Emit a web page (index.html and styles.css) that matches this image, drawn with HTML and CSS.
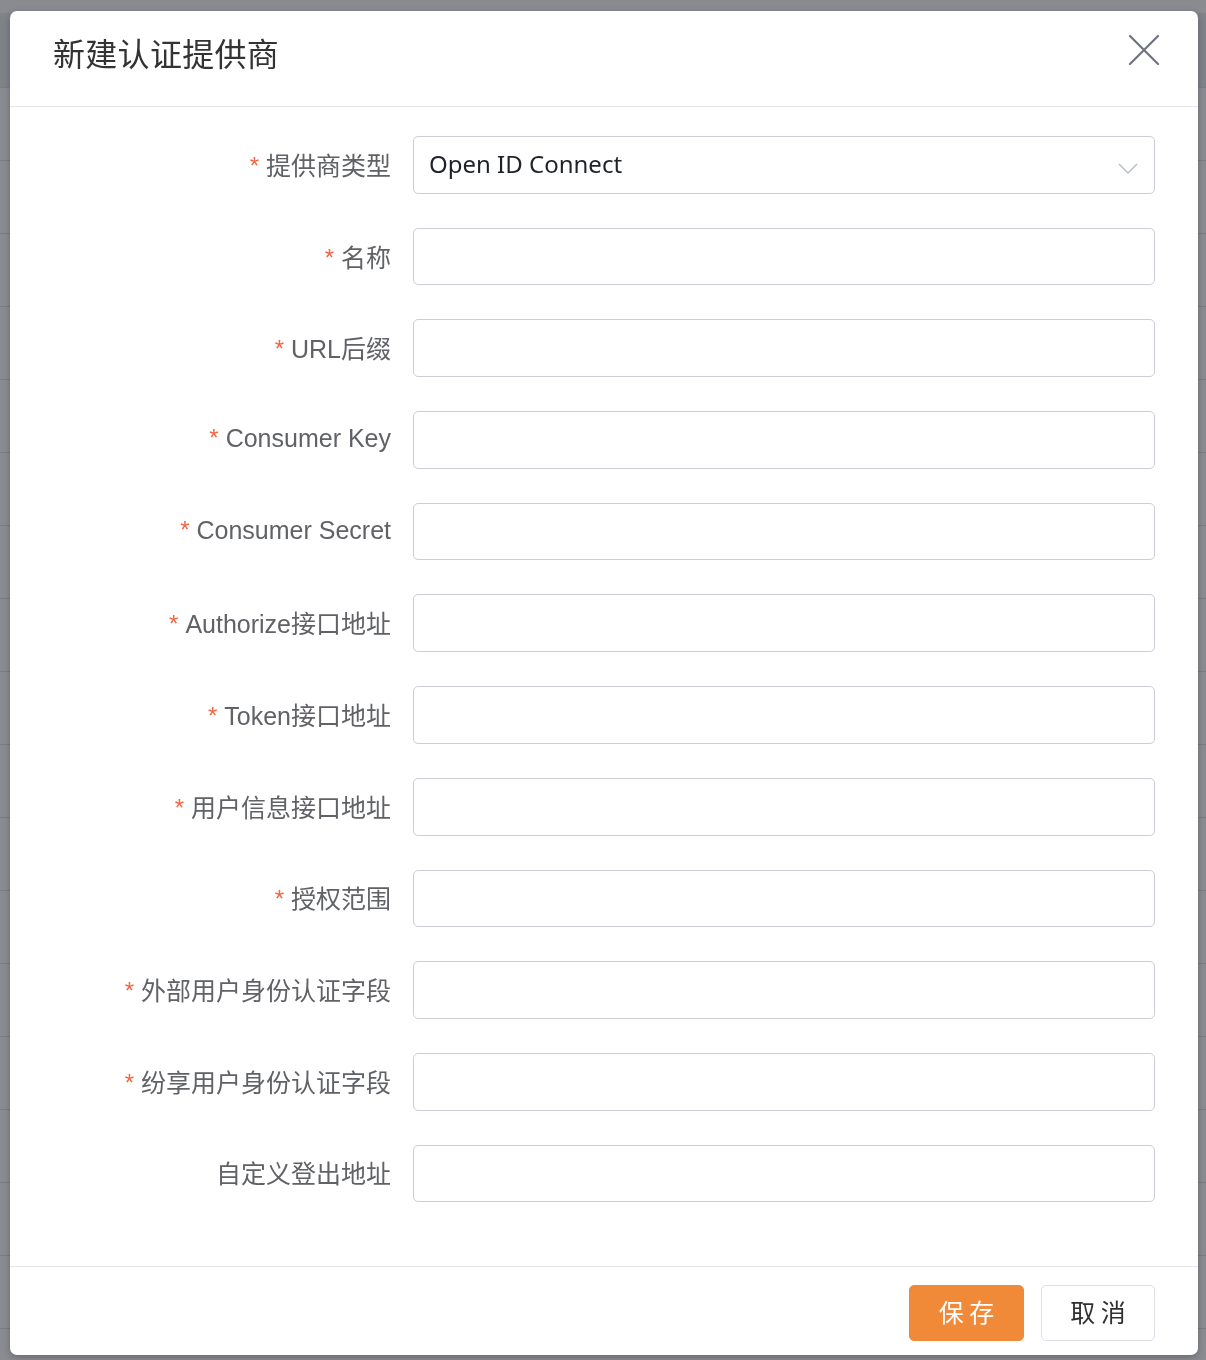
FILE: index.html
```html
<!DOCTYPE html>
<html lang="zh-CN">
<head>
<meta charset="utf-8">
<title>新建认证提供商</title>
<link rel="stylesheet" href="styles.css">
</head>
<body>
<div class="page">
  <div class="page-top"></div>
  <div class="page-head"></div>
  <div class="page-row"></div><div class="page-row"></div><div class="page-row"></div>
  <div class="page-row"></div><div class="page-row"></div><div class="page-row"></div>
  <div class="page-row"></div><div class="page-row"></div><div class="page-row"></div>
  <div class="page-row"></div><div class="page-row"></div><div class="page-row"></div>
  <div class="page-row"></div><div class="page-row"></div><div class="page-row"></div>
  <div class="page-row"></div><div class="page-row"></div><div class="page-row"></div>
</div>
<div class="mask"></div>

<div class="dialog">
  <div class="dialog-header">
    <span class="dialog-title">新建认证提供商</span>
    <button class="dialog-close" type="button" aria-label="关闭">
      <svg width="32" height="30" viewBox="0 0 32 30"><path d="M2 1 L30 29 M30 1 L2 29" stroke="#6f7380" stroke-width="2.2" stroke-linecap="round" fill="none"/></svg>
    </button>
  </div>

  <form class="dialog-body">
    <div class="form-item">
      <label class="form-label required">提供商类型</label>
      <div class="form-control select">
        <span class="select-value">Open ID Connect</span>
        <svg class="select-arrow" width="20" height="11" viewBox="0 0 20 11"><path d="M1 1 L10 10 L19 1" stroke="#bcc0c8" stroke-width="1.6" fill="none"/></svg>
      </div>
    </div>
    <div class="form-item">
      <label class="form-label required">名称</label>
      <input class="form-control" type="text">
    </div>
    <div class="form-item">
      <label class="form-label required">URL后缀</label>
      <input class="form-control" type="text">
    </div>
    <div class="form-item">
      <label class="form-label required">Consumer Key</label>
      <input class="form-control" type="text">
    </div>
    <div class="form-item">
      <label class="form-label required">Consumer Secret</label>
      <input class="form-control" type="text">
    </div>
    <div class="form-item">
      <label class="form-label required">Authorize接口地址</label>
      <input class="form-control" type="text">
    </div>
    <div class="form-item">
      <label class="form-label required">Token接口地址</label>
      <input class="form-control" type="text">
    </div>
    <div class="form-item">
      <label class="form-label required">用户信息接口地址</label>
      <input class="form-control" type="text">
    </div>
    <div class="form-item">
      <label class="form-label required">授权范围</label>
      <input class="form-control" type="text">
    </div>
    <div class="form-item">
      <label class="form-label required">外部用户身份认证字段</label>
      <input class="form-control" type="text">
    </div>
    <div class="form-item">
      <label class="form-label required">纷享用户身份认证字段</label>
      <input class="form-control" type="text">
    </div>
    <div class="form-item">
      <label class="form-label">自定义登出地址</label>
      <input class="form-control" type="text">
    </div>
  </form>

  <div class="dialog-footer">
    <button class="btn btn-primary" type="button">保 存</button>
    <button class="btn btn-default" type="button">取 消</button>
  </div>
</div>
</body>
</html>
```

FILE: styles.css
```css
* { box-sizing: border-box; }

html, body {
  margin: 0;
  padding: 0;
  width: 1206px;
  height: 1360px;
  overflow: hidden;
  font-family: "Liberation Sans", "Noto Sans CJK SC", sans-serif;
}

/* underlying list page */
.page {
  background: #ffffff;
  height: 1360px;
}
.page-top { height: 13px; background: #ffffff; }
.page-head { height: 75px; background: #ebedf0; border-bottom: 1px solid #e2e4e8; }
.page-row { height: 73px; border-bottom: 1px solid #e0e1e4; }

.mask {
  position: fixed;
  inset: 0;
  background: rgba(9, 13, 26, 0.48);
}

/* dialog */
.dialog {
  position: absolute;
  left: 10px;
  top: 11px;
  width: 1188px;
  height: 1344px;
  background: #ffffff;
  border-radius: 7px;
  box-shadow: 0 2px 6px rgba(0, 0, 0, 0.25);
  display: flex;
  flex-direction: column;
}

.dialog-header {
  height: 96px;
  padding: 0 38px 0 43px;
  border-bottom: 1px solid #e4e4e7;
  display: flex;
  align-items: center;
  justify-content: space-between;
  flex-shrink: 0;
}
.dialog-title {
  font-family: "Noto Sans CJK SC", sans-serif;
  font-size: 32px;
  color: #333333;
  margin-top: -14px;
  letter-spacing: 0.3px;
}
.dialog-close {
  border: 0;
  background: none;
  padding: 0;
  width: 32px;
  height: 30px;
  margin-top: -17px;
  cursor: pointer;
}
.dialog-close svg { display: block; }

.dialog-body {
  flex: 1;
  margin: 0;
  padding: 29px 43px 0 43px;
}

.form-item {
  display: flex;
  align-items: center;
  height: 57.7px;
  margin-bottom: 34px;
}
.form-label {
  width: 360px;
  padding-right: 22px;
  text-align: right;
  font-size: 25px;
  color: #606266;
  white-space: nowrap;
  flex-shrink: 0;
  margin-top: -2px;
}
.form-label.required::before {
  content: "*";
  color: #f3653f;
  margin-right: 7px;
  font-size: 24px;
  position: relative;
  top: -1px;
}

.form-control {
  flex: 1;
  height: 57.7px;
  border: 1px solid #cccdd5;
  border-radius: 5px;
  background: #ffffff;
  font-size: 25px;
  padding: 0 15px;
  outline: none;
  margin: 0;
}
.select {
  display: flex;
  align-items: center;
  justify-content: space-between;
}
.select-value {
  font-family: "Noto Sans", "Noto Sans CJK SC", sans-serif;
  font-size: 24px;
  color: #1f2329;
  margin-top: -2px;
}
.select-arrow { margin-right: 1px; margin-top: 8px; }

.dialog-footer {
  height: 89px;
  flex-shrink: 0;
  border-top: 1px solid #e4e4e7;
  display: flex;
  justify-content: flex-end;
  align-items: flex-start;
  gap: 17px;
  padding: 18px 43px 0 0;
}

.btn {
  height: 56px;
  border-radius: 5px;
  font-family: "Noto Sans CJK SC", sans-serif;
  font-size: 25px;
  padding: 0 0 4px 0;
  cursor: pointer;
}
.btn-primary {
  width: 115px;
  background: #f08a38;
  border: 1px solid #f08a38;
  color: #ffffff;
}
.btn-default {
  width: 114px;
  background: #ffffff;
  border: 1px solid #dcdfe6;
  color: #303133;
}
```
